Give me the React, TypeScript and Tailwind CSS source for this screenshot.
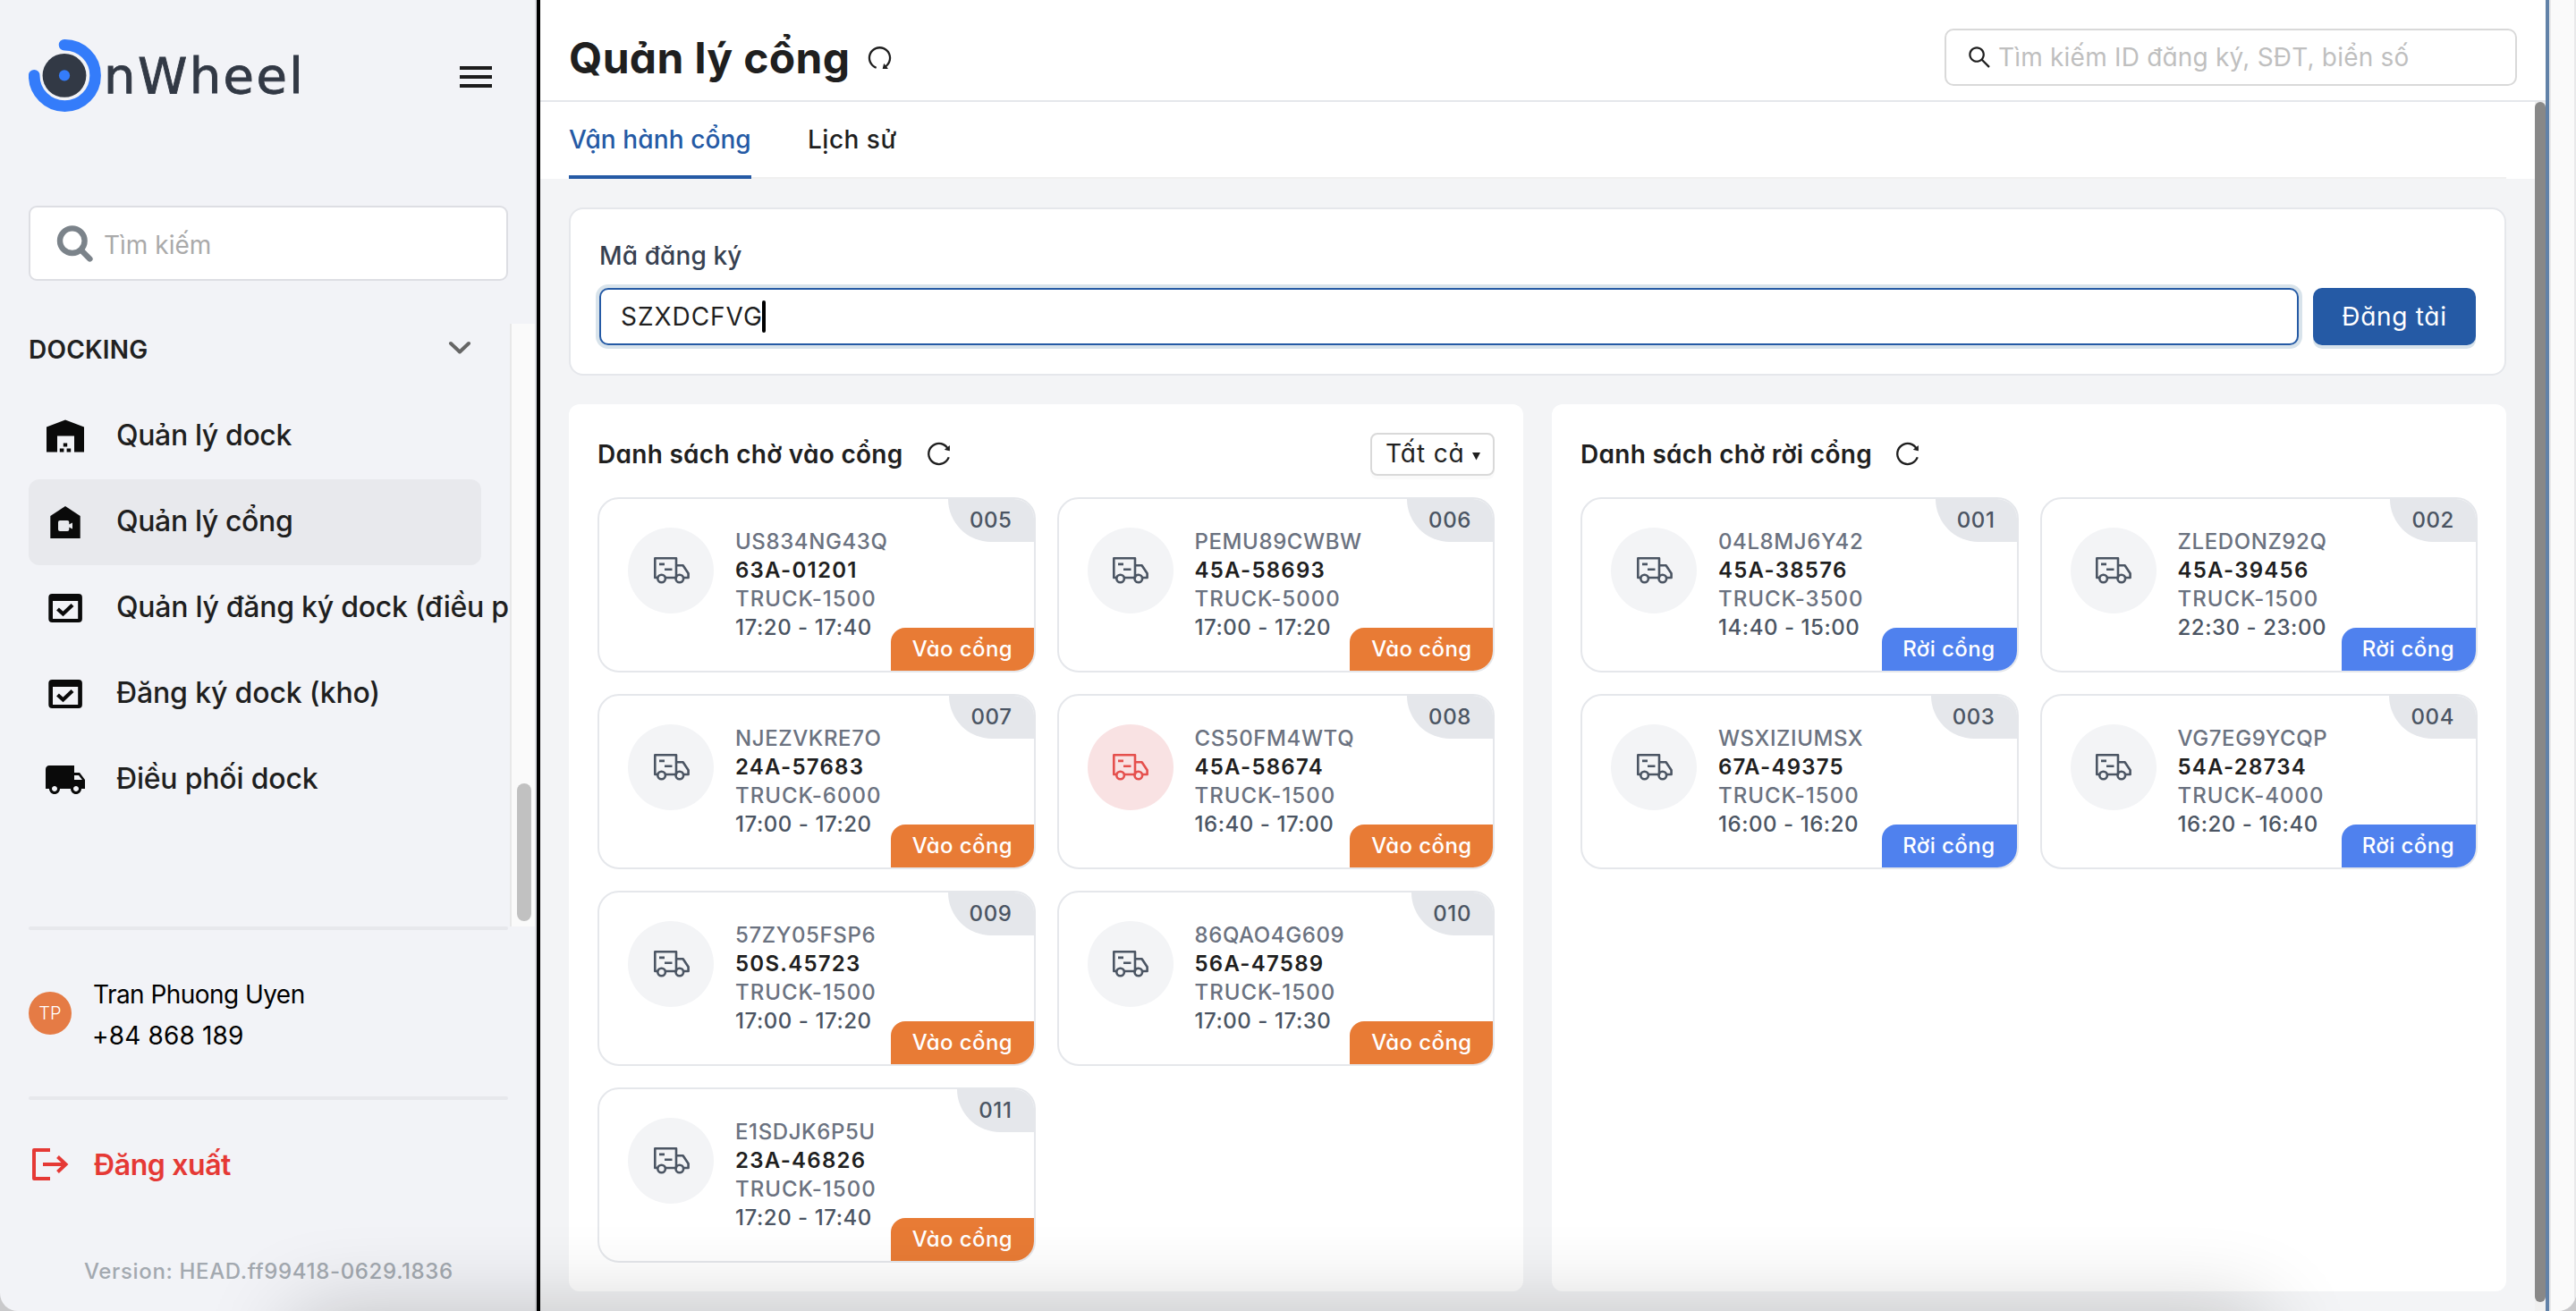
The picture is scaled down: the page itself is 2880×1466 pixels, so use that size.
import React from "react";
import { AiOutlineReload, AiOutlineSearch } from "react-icons/ai";
import { MdLocalShipping } from "react-icons/md";

type Entry = {
  no: string;
  code: string;
  plate: string;
  truck: string;
  time: string;
  late?: boolean;
};

const incoming: Entry[] = [
  { no: "005", code: "US834NG43Q", plate: "63A-01201", truck: "TRUCK-1500", time: "17:20 - 17:40" },
  { no: "006", code: "PEMU89CWBW", plate: "45A-58693", truck: "TRUCK-5000", time: "17:00 - 17:20" },
  { no: "007", code: "NJEZVKRE7O", plate: "24A-57683", truck: "TRUCK-6000", time: "17:00 - 17:20" },
  { no: "008", code: "CS50FM4WTQ", plate: "45A-58674", truck: "TRUCK-1500", time: "16:40 - 17:00", late: true },
  { no: "009", code: "57ZY05FSP6", plate: "50S.45723", truck: "TRUCK-1500", time: "17:00 - 17:20" },
  { no: "010", code: "86QAO4G609", plate: "56A-47589", truck: "TRUCK-1500", time: "17:00 - 17:30" },
  { no: "011", code: "E1SDJK6P5U", plate: "23A-46826", truck: "TRUCK-1500", time: "17:20 - 17:40" },
];

const outgoing: Entry[] = [
  { no: "001", code: "04L8MJ6Y42", plate: "45A-38576", truck: "TRUCK-3500", time: "14:40 - 15:00" },
  { no: "002", code: "ZLEDONZ92Q", plate: "45A-39456", truck: "TRUCK-1500", time: "22:30 - 23:00" },
  { no: "003", code: "WSXIZIUMSX", plate: "67A-49375", truck: "TRUCK-1500", time: "16:00 - 16:20" },
  { no: "004", code: "VG7EG9YCQP", plate: "54A-28734", truck: "TRUCK-4000", time: "16:20 - 16:40" },
];

function TruckOutline() {
  return (
    <svg width="42" height="32" viewBox="0 0 42 32" fill="none" stroke="currentColor" strokeWidth="2.6" strokeLinejoin="round" className="ml-px">
      <path d="M5 24H2.3V2.3H26V24H14" />
      <path d="M26 10.3H33.6L39.6 19.2V24H34.5M26 24H25" />
      <circle cx="9.6" cy="25" r="4.3" />
      <circle cx="29.8" cy="25" r="4.3" />
      <path d="M7 8.9H13M13 14.7H21.5" />
    </svg>
  );
}

function Card({ entry, out }: { entry: Entry; out?: boolean }) {
  return (
    <div className="relative flex h-[196px] gap-6 overflow-hidden rounded-[24px] border-2 border-[#e5e7eb] bg-white p-8">
      <div
        className={
          entry.late
            ? "flex size-24 shrink-0 items-center justify-center rounded-full bg-[#f9e2e3] text-[#e5504d]"
            : "flex size-24 shrink-0 items-center justify-center rounded-full bg-[#f3f4f6] text-[#4b5563]"
        }
      >
        <TruckOutline />
      </div>
      <div className="flex flex-col text-[24px] leading-8 font-medium whitespace-nowrap text-[#6b7280]">
        <span className="tracking-[0.6px]">{entry.code}</span>
        <span className="font-semibold tracking-[1.25px] text-[#1f1f1f]">{entry.plate}</span>
        <span className="tracking-[1px]">{entry.truck}</span>
        <span className="tracking-[0.55px] text-[#4b5563]">{entry.time}</span>
      </div>
      <div className="absolute top-0 right-0 h-12 rounded-bl-[48px] bg-[#e5e7eb] pr-[24px] pl-6 text-[24px] leading-[47px] font-medium tracking-[0.6px] text-[#4b5563]">
        {entry.no}
      </div>
      <div
        className={
          out
            ? "absolute right-0 bottom-0 h-12 rounded-tl-[16px] bg-[#4f81ee] pr-6 pl-[23px] text-[24px] leading-[47px] font-medium tracking-[0.45px] text-white"
            : "absolute right-0 bottom-0 h-12 rounded-tl-[16px] bg-[#e87b35] pr-[23.5px] pl-6 text-[24px] leading-[47px] font-medium tracking-[0.4px] text-white"
        }
      >
        {out ? "Rời cổng" : "Vào cổng"}
      </div>
    </div>
  );
}

function WarehouseIcon() {
  return (
    <svg width="48" height="48" viewBox="0 0 48 48" fill="#0a0a0a">
      <path d="M3 13.5L24 5.5L45 13.5V41.5H34V23.5H15V41.5H3Z" />
      <path d="M21.8 31.5H26.2V35.5H21.8ZM17.8 37.5H22.4V41.5H17.8ZM25.6 37.5H30.2V41.5H25.6Z" />
    </svg>
  );
}

function GateIcon() {
  return (
    <svg width="48" height="48" viewBox="0 0 48 48">
      <path d="M24 6L40.7 17V42H7.3V17Z" fill="#0a0a0a" />
      <rect x="16" y="22" width="12.3" height="12" rx="2" fill="#e8e9ed" />
      <path d="M28 26.5L32 24.5V31.5L28 29.5Z" fill="#e8e9ed" />
    </svg>
  );
}

function CheckWindowIcon() {
  return (
    <svg width="48" height="48" viewBox="0 0 48 48">
      <rect x="5.3" y="8" width="37.6" height="32" rx="4" fill="#0a0a0a" />
      <rect x="10" y="16" width="28.2" height="20" fill="#f2f3f7" />
      <path d="M15.5 25L21.5 30.5L32 20.5" fill="none" stroke="#0a0a0a" strokeWidth="4.2" />
    </svg>
  );
}

const nav = [
  { label: "Quản lý dock", icon: <WarehouseIcon />, cls: "tracking-[-0.38px]" },
  { label: "Quản lý cổng", icon: <GateIcon />, cls: "tracking-[-0.38px]", active: true },
  { label: "Quản lý đăng ký dock (điều phối)", icon: <CheckWindowIcon />, cls: "tracking-[-0.27px]" },
  { label: "Đăng ký dock (kho)", icon: <CheckWindowIcon />, cls: "tracking-[-0.15px]" },
  { label: "Điều phối dock", icon: <MdLocalShipping size={50} color="#0a0a0a" />, cls: "tracking-[-0.2px]" },
];

function Sidebar() {
  return (
    <aside className="flex w-[600px] shrink-0 flex-col border-r-2 border-[#dcdde2] bg-[#f2f3f7]">
      <div className="flex h-[230px] items-start pt-[43px] pl-8">
        <svg width="82" height="82" viewBox="0 0 82 82" fill="none">
          <path d="M40 7.2A34.2 34.2 0 1 1 6.2 41.2" stroke="#347cfa" strokeWidth="12.6" strokeLinecap="round" />
          <circle cx="40" cy="41.4" r="24.4" fill="#323945" />
          <circle cx="40" cy="41.4" r="6.1" fill="#347cfa" />
        </svg>
        <span className="mt-[11px] ml-[2px] font-['DejaVu_Sans'] text-[56px] leading-[62px] tracking-[2.4px] text-[#323945] [-webkit-text-stroke:0.9px_#323945]">
          nWheel
        </span>
        <div className="mt-[31px] mr-[48px] ml-auto flex w-9 flex-col gap-1.5">
          <i className="h-1 bg-[#1c1c1c]" />
          <i className="h-1 bg-[#1c1c1c]" />
          <i className="h-1 bg-[#1c1c1c]" />
        </div>
      </div>
      <div className="mr-[30px] ml-8 flex h-[84px] items-center rounded-[9px] border-2 border-[#dddee3] bg-white pl-[29px]">
        <svg width="42" height="42" viewBox="0 0 42 42" fill="none" stroke="#7b838a" strokeWidth="6.4">
          <circle cx="17.8" cy="18.2" r="13.8" />
          <path d="M27.5 28.5L37.4 38.4" strokeLinecap="round" />
        </svg>
        <span className="mt-[3px] ml-[11px] text-[28px] leading-none text-[#aaaaaa]">Tìm kiếm</span>
      </div>
      <div className="mt-12 flex h-[674px]">
        <div className="w-[570px] overflow-hidden pl-8">
          <div className="flex h-14 items-center justify-between pr-[42px]">
            <span className="mt-px text-[28px] font-semibold tracking-[0.2px] text-[#212121]">DOCKING</span>
            <svg width="28" height="16" viewBox="0 0 28 16" fill="none" stroke="#666" strokeWidth="4" strokeLinecap="round" strokeLinejoin="round" className="-mt-0.5">
              <path d="M4 3L14 12.5L24 3" />
            </svg>
          </div>
          <div className="mt-[22px] flex flex-col">
            {nav.map((n) => (
              <div
                key={n.label}
                className={
                  n.active
                    ? "flex h-24 w-[506px] items-center rounded-[12px] bg-[#e8e9ed] pl-[17px]"
                    : "flex h-24 w-[506px] items-center pl-[17px]"
                }
              >
                <span className="flex w-12 justify-center">{n.icon}</span>
                <span className={`-mt-[2px] ml-[33px] text-[32px] leading-[44px] font-medium whitespace-nowrap text-[#1f1f1f] ${n.cls}`}>{n.label}</span>
              </div>
            ))}
          </div>
        </div>
        <div className="w-[28px] shrink-0 border-l-2 border-[#e8e8e8] bg-[#fafafa] pt-[514px] pl-1.5">
          <div className="h-[154px] w-4 rounded-full bg-[#c1c1c1]" />
        </div>
      </div>
      <div className="ml-8 h-1 w-[536px] rounded-sm bg-[#e7e8ec]" />
      <div className="flex h-[186px] items-center pl-8">
        <div className="flex size-12 items-center justify-center rounded-full bg-[#e57b45] text-[20px] font-light text-white">TP</div>
        <div className="mt-1 ml-[24px] flex flex-col text-[28px] leading-[46px] text-black">
          <span className="tracking-[-0.55px]">Tran Phuong Uyen</span>
          <span className="-ml-px tracking-[0.15px]">+84 868 189</span>
        </div>
      </div>
      <div className="ml-8 h-1 w-[536px] rounded-sm bg-[#e7e8ec]" />
      <div className="flex h-[144px] items-center pl-8">
        <svg width="48" height="48" viewBox="0 0 48 48" fill="none" stroke="#e53935" strokeWidth="4" strokeLinejoin="round">
          <path d="M24 8H6V40H24" />
          <path d="M16 24H42M32.5 15.5L41.5 24L32.5 32.5" strokeLinejoin="miter" />
        </svg>
        <span className="mt-[2px] ml-[25px] text-[32px] font-semibold tracking-[-0.4px] text-[#e53935]">Đăng xuất</span>
      </div>
      <div className="mt-[32px] pl-[94px] text-[24px] leading-8 font-medium tracking-[0.65px] text-[#a3a9b0]">
        Version: HEAD.ff99418-0629.1836
      </div>
    </aside>
  );
}

function Header() {
  return (
    <header className="flex h-[114px] items-start border-b-2 border-[#e5e7eb] bg-white pt-8 pr-8 pl-8">
      <h1 className="mt-px text-[48px] leading-[64px] font-bold tracking-[0.35px] text-[#1f1f1f]">Quản lý cổng</h1>
      <AiOutlineReload size={31} color="#1f1f1f" className="mt-[17px] ml-[17px] rotate-90" />
      <div className="ml-auto flex h-16 w-[640px] items-center rounded-[10px] border-2 border-[#d9d9d9] pl-[22px]">
        <AiOutlineSearch size={30} color="#1f1f1f" />
        <span className="ml-[6px] text-[28px] tracking-[0.2px] text-[#bfbfbf]">Tìm kiếm ID đăng ký, SĐT, biển số</span>
      </div>
    </header>
  );
}

function Tabs() {
  return (
    <div className="flex h-[86px] bg-white pr-8 pl-8">
      <div className="flex flex-1 items-stretch gap-16 border-b-2 border-[#f0f0f0] text-[28px] leading-[84px] font-medium">
        <div className="-mb-0.5 h-[86px] w-[204px] border-b-4 border-[#255aa5] tracking-[0.1px] whitespace-nowrap text-[#255aa5]">Vận hành cổng</div>
        <div className="-ml-px tracking-[0.5px] text-[#1f1f1f]">Lịch sử</div>
      </div>
    </div>
  );
}

function RegisterForm() {
  return (
    <section className="rounded-[16px] border-2 border-[#e5e7eb] bg-white p-8">
      <div className="text-[28px] leading-10 font-medium tracking-[0.1px] text-[#374151]">Mã đăng ký</div>
      <div className="mt-4 flex gap-4">
        <div className="flex h-16 flex-1 items-center rounded-[10px] border-2 border-[#255aa5] bg-white pl-[22px] shadow-[0_0_0_4px_#d8e3eb]">
          <span className="text-[28px] leading-[58px] tracking-[0.95px] text-[#1f1f1f]">SZXDCFVG</span>
          <i className="-ml-px h-9 w-1 rounded-sm bg-black" />
        </div>
        <button className="h-16 w-[182px] rounded-[10px] bg-[#255aa5] text-[28px] leading-[60px] tracking-[0.7px] text-white shadow-[0_4px_0_#d8e3eb]">
          Đăng tài
        </button>
      </div>
    </section>
  );
}

function Panel({ title, list, out }: { title: string; list: Entry[]; out?: boolean }) {
  return (
    <section className="flex flex-1 flex-col rounded-[12px] bg-white p-8">
      <div className="flex h-12 items-center">
        <h2 className="text-[28px] leading-[48px] font-semibold tracking-[0.28px] text-[#1f1f1f]">{title}</h2>
        <AiOutlineReload size={31} color="#1f1f1f" className="-mt-0.5 ml-[24px]" />
        {!out && (
          <div className="ml-auto flex h-12 w-[139px] items-center rounded-[8px] border-2 border-[#d9d9d9] bg-white pl-[15px] text-[28px] leading-[42px] text-[#1f1f1f] shadow-[0_4px_0_#fafafa]">
            <span className="-mt-0.5 tracking-[0.8px] whitespace-nowrap">Tất cả</span>
            <svg width="9" height="9" viewBox="0 0 9 9" className="mt-1 ml-[9px]">
              <path d="M0 0H9L4.5 8.5Z" fill="#1f1f1f" />
            </svg>
          </div>
        )}
      </div>
      <div className="mt-6 grid grid-cols-2 gap-6">
        {list.map((e) => (
          <Card key={e.no} entry={e} out={out} />
        ))}
      </div>
    </section>
  );
}

export default function App() {
  return (
    <div className="h-[1466px] w-[2880px] overflow-hidden bg-[#c9c9cb] font-['Inter',sans-serif]">
      <div className="relative flex h-full w-full overflow-hidden rounded-b-[20px]">
        <Sidebar />
        <div className="w-1 shrink-0 bg-black" />
        <main className="flex w-[2242px] shrink-0 flex-col [font-feature-settings:'cv11']">
          <Header />
          <div className="flex flex-1">
            <div className="flex w-[2230px] flex-col bg-[#f3f4f6]">
              <Tabs />
              <div className="flex flex-col gap-8 pt-8 pr-8 pl-8">
                <RegisterForm />
                <div className="flex h-[992px] gap-8">
                  <Panel title="Danh sách chờ vào cổng" list={incoming} />
                  <Panel title="Danh sách chờ rời cổng" list={outgoing} out />
                </div>
              </div>
            </div>
            <div className="w-3 bg-[#f0f0f0]">
              <div className="h-[1342px] rounded-full bg-[#888888]" />
            </div>
          </div>
        </main>
        <div className="w-1 shrink-0 bg-[#6282a8]" />
        <div className="flex-1 border-x-2 border-[#e9e9ea] bg-[#fafafa]" />
        {/* soft shade cast upward from below the window */}
        <div className="pointer-events-none absolute top-[1472px] right-[350px] left-[330px] h-40 shadow-[0_0_100px_0_rgba(0,0,0,0.24)]" />
      </div>
    </div>
  );
}
